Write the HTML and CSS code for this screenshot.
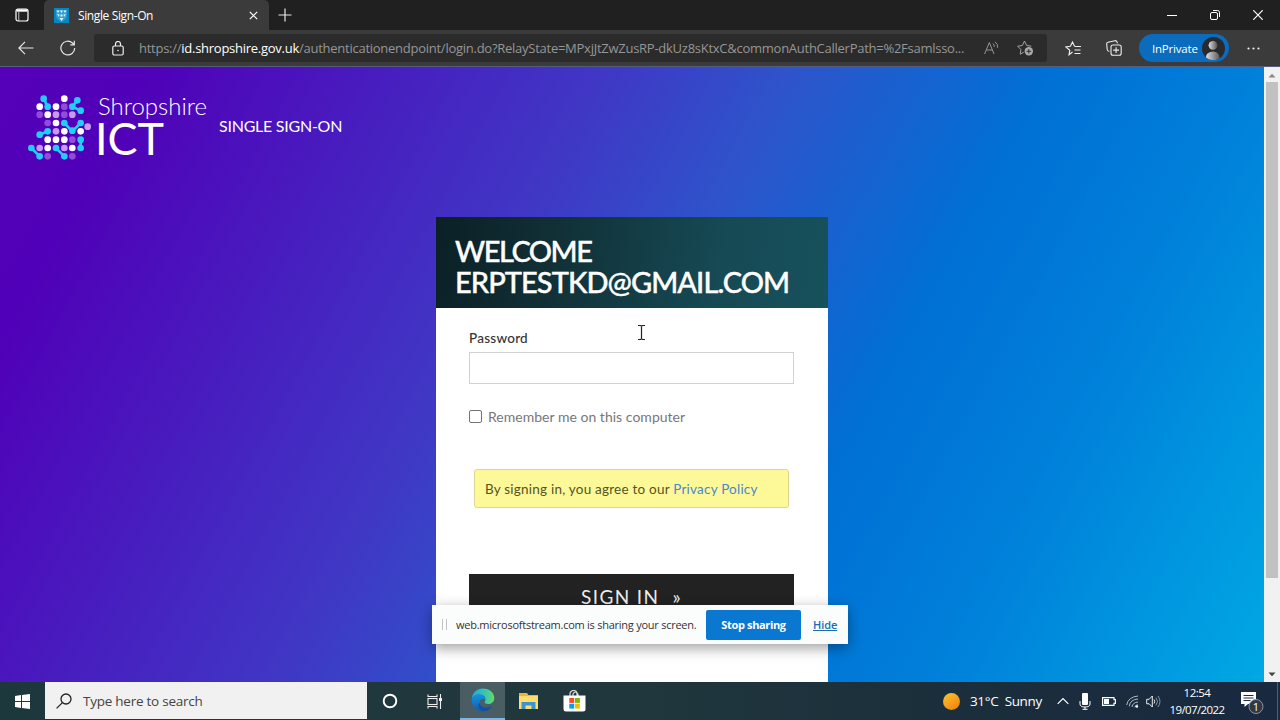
FILE: index.html
```html
<!DOCTYPE html>
<html lang="en">
<head>
<meta charset="utf-8">
<title>Single Sign-On</title>
<link rel="stylesheet" href="styles.css">
</head>
<body>
<div class="desktop">
  <header class="tabbar">
    <div class="tab-actions">
      <svg width="14" height="14" viewBox="0 0 14 14" fill="none" stroke="#fff"><rect x="1" y="1" width="12" height="12" rx="2" stroke-width="1.2"/><path d="M1.5 2.5h11" stroke-width="2.4"/><path d="M3.8 4v9" stroke-width="1" opacity=".7"/></svg>
    </div>
    <div class="tab">
      <svg class="favicon" width="15" height="15" viewBox="0 0 15 15"><rect width="15" height="15" fill="#0787bd"/><path d="M2 2h11v5c0 3-2 5-5.5 7C4 12 2 10 2 7z" fill="#329fd0"/><path d="M2.500 2.500h3L4 5zM6 2.500h3L7.500 5zM9.500 2.500h3L11 5zM3 6l2.500.5L5 9zM12 6l-2.500.5L10 9zM6.500 6.500h2v2h-2zM5.500 10h4l-2 3z" fill="#e6f5fc"/></svg>
      <span class="tab-title">Single Sign-On</span>
      <svg class="tab-close" width="9" height="9" viewBox="0 0 9 9" stroke="#fff" stroke-width="1.200"><path d="M.8.8l7.400 7.400M8.200.8L.8 8.200"/></svg>
    </div>
    <svg class="new-tab" width="14" height="14" viewBox="0 0 14 14" stroke="#e8e8e8" stroke-width="1.200"><path d="M7 .5v13M.5 7h13"/></svg>
    <div class="window-buttons">
      <svg width="10" height="10" viewBox="0 0 10 10" stroke="#fff"><path d="M0 5.500h10"/></svg>
      <svg width="10" height="10" viewBox="0 0 10 10" stroke="#fff" fill="none"><rect x=".5" y="2.500" width="7" height="7" rx="1.500"/><path d="M3 .5h4.500a2 2 0 0 1 2 2v4.500"/></svg>
      <svg width="10" height="10" viewBox="0 0 10 10" stroke="#fff" stroke-width="1.200"><path d="M.3.3l9.400 9.400M9.700.3L.3 9.700"/></svg>
    </div>
  </header>

  <nav class="toolbar">
    <svg class="back" width="16" height="14" viewBox="0 0 16 14" fill="none" stroke="#e6e6e6" stroke-width="1.200"><path d="M15.500 7H1M7 .8L.9 7 7 13.200"/></svg>
    <svg class="reload" width="16" height="16" viewBox="0 0 16 16" fill="none" stroke="#e6e6e6" stroke-width="1.200"><path d="M14.700 8A6.900 6.900 0 1 1 12.500 3L14 4.500M14.300.8v4H10.300"/></svg>
    <div class="address">
      <svg class="lock" width="12" height="15" viewBox="0 0 12 15" fill="none" stroke="#eee" stroke-width="1.200"><rect x=".8" y="5" width="10.400" height="9" rx="1.500"/><path d="M3.500 5V3a2.500 2.500 0 0 1 5 0v2"/><circle cx="6" cy="9.500" r=".8" fill="#eee" stroke="none"/></svg>
      <span class="url">https://<b>id.shropshire.gov.uk</b><span class="url-path">/authenticationendpoint/login.do?RelayState=MPxjJtZwZusRP-dkUz8sKtxC&amp;commonAuthCallerPath=%2Fsamlsso...</span></span>
      <svg class="read-aloud" width="15" height="14" viewBox="0 0 15 14" fill="none" stroke="#969696"><path d="M.6 13L5.300 1.500 10 13M2.200 9h6.200M9 2.500q1.500 1.500 1.300 3.500M11 .8q3 2.300 2.700 6"/></svg>
      <svg class="add-fav" width="17" height="16" viewBox="0 0 17 16" fill="none" stroke="#a5a5a5"><path d="M6.800 12.200L3.200 14.200l.7-4.700L.7 6.200l4.600-.7L7.500 1l2.200 4.500 4.600.7"/><circle cx="11.800" cy="11.300" r="4.200" fill="#aaa" stroke="none"/><path d="M11.800 9v4.600M9.500 11.300h4.600" stroke="#2b2b2b"/></svg>
    </div>
    <svg class="favs" width="17" height="15" viewBox="0 0 17 15" fill="none" stroke="#eee" stroke-width="1.100"><path d="M7.500 11L4 13.800l.8-4.600L.8 6l4.600-.7L7.500 1l2 4.300M9.500 5.500h6.500M9.500 9h6M9.500 12.500h6"/></svg>
    <svg class="collections" width="16" height="16" viewBox="0 0 16 16" fill="none" stroke="#eee" stroke-width="1.100"><rect x="5" y="5" width="10.200" height="10.200" rx="2"/><path d="M10.100 7.200v5.800M7.200 10.100H13M3.300 11.500Q1.500 11 1.200 9.500L.7 4Q.5 2.500 2 2.200L9 .7Q10.500.5 11 2l.5 1.200"/></svg>
    <div class="inprivate"><span>InPrivate</span>
      <svg width="23" height="23" viewBox="0 0 23 23"><defs><linearGradient id="person"><stop stop-color="#ddd"/><stop offset="1" stop-color="#555"/></linearGradient><clipPath id="avatar"><circle cx="11.500" cy="11.500" r="11.500"/></clipPath></defs><g clip-path="url(#avatar)"><rect width="23" height="23" fill="#282a2d"/><circle cx="11" cy="8.300" r="4.400" fill="url(#person)"/><path d="M4 23v-3q0-5 7.500-5.500Q18 15 18 23z" fill="url(#person)"/></g></svg>
    </div>
    <svg class="more" width="13" height="3" viewBox="0 0 13 3" fill="#eee"><circle cx="1.500" cy="1.500" r="1.100"/><circle cx="6.500" cy="1.500" r="1.100"/><circle cx="11.500" cy="1.500" r="1.100"/></svg>
  </nav>

  <div class="viewport">
    <main class="page">
      <div class="brand">
        <svg class="logo" width="64" height="68" viewBox="39 39 192 204">
          <path d="M86 56l12 24M187 61l-15 19 25 12M148 129l24 25 25-25M74 164l24-10M197 179v25M49 204l25 25M123 204l25 25" fill="none" stroke="#22cdf8" stroke-width="8"/>
          <g fill="#fff"><circle cx="148" cy="56" r="10"/><circle cx="74" cy="80" r="10"/><circle cx="123" cy="80" r="10"/><circle cx="98" cy="104" r="10"/><circle cx="123" cy="129" r="10"/><circle cx="148" cy="154" r="10"/><circle cx="197" cy="154" r="10"/><circle cx="98" cy="179" r="10"/><circle cx="123" cy="179" r="10"/><circle cx="148" cy="179" r="10"/><circle cx="98" cy="204" r="10"/><circle cx="172" cy="204" r="10"/></g>
          <g fill="#22cdf8"><circle cx="86" cy="56" r="10"/><circle cx="187" cy="61" r="10"/><circle cx="98" cy="80" r="10"/><circle cx="172" cy="80" r="10"/><circle cx="197" cy="92" r="10"/><circle cx="148" cy="129" r="10"/><circle cx="197" cy="129" r="10"/><circle cx="172" cy="152" r="10"/><circle cx="98" cy="154" r="10"/><circle cx="74" cy="164" r="10"/><circle cx="197" cy="179" r="10"/><circle cx="197" cy="204" r="10"/><circle cx="49" cy="204" r="10"/><circle cx="123" cy="204" r="10"/><circle cx="74" cy="229" r="10"/><circle cx="148" cy="229" r="10"/></g>
          <g fill="#c69af2"><circle cx="123" cy="104" r="10"/><circle cx="172" cy="104" r="10"/><circle cx="218" cy="140" r="10"/><circle cx="123" cy="154" r="10"/><circle cx="74" cy="204" r="10"/><circle cx="148" cy="204" r="10"/></g>
          <g fill="#914dd8"><circle cx="148" cy="80" r="10"/><circle cx="74" cy="104" r="10"/><circle cx="148" cy="104" r="10"/><circle cx="98" cy="129" r="10"/><circle cx="172" cy="179" r="10"/><circle cx="98" cy="229" r="10"/><circle cx="172" cy="229" r="10"/></g>
        </svg>
        <svg class="wordmark" width="116" height="70" viewBox="0 0 116 70" fill="#fff">
          <text class="word-top" x="6" y="22" textLength="109" lengthAdjust="spacingAndGlyphs">Shropshire</text>
          <text class="word-main" x="3" y="62" textLength="69" lengthAdjust="spacingAndGlyphs">ICT</text>
        </svg>
        <span class="product">SINGLE SIGN-ON</span>
      </div>

      <section class="card">
        <h1 class="welcome"><span class="w1">WELCOME</span><span class="w2">ERPTESTKD@GMAIL.COM</span></h1>
        <div class="form">
          <span class="label">Password</span>
          <div class="field"></div>
          <div class="remember"><span class="box"></span><span>Remember me on this computer</span></div>
          <div class="notice"><span>By signing in, you agree to our </span><a>Privacy Policy</a></div>
          <div class="signin"><span>SIGN IN</span><span class="raquo">»</span></div>
        </div>
      </section>
    </main>
    <div class="scrollbar">
      <svg width="8" height="5" viewBox="0 0 8 5"><path d="M.5 4.500L4 .8l3.500 3.700z" fill="#8a8a8a"/></svg>
      <div class="thumb"></div>
      <svg width="8" height="5" viewBox="0 0 8 5"><path d="M.5.5L4 4.200 7.500.5z" fill="#444"/></svg>
    </div>
  </div>

  <footer class="taskbar">
    <div class="start"><svg width="15" height="15" viewBox="0 0 15 15" fill="#fff"><path d="M0 2l6-.9v6H0zM7 1l8-1v7.100H7zM0 8h6v6l-6-.9zM7 8h8v7l-8-1z"/></svg></div>
    <div class="search"><svg width="16" height="16" viewBox="0 0 16 16" fill="none" stroke="#222" stroke-width="1.300"><circle cx="10" cy="6" r="5"/><path d="M6.400 9.600L.6 15.400"/></svg><span>Type here to search</span></div>
    <div class="task"><svg width="16" height="16" viewBox="0 0 16 16"><circle cx="8" cy="8" r="6.300" fill="none" stroke="#fff" stroke-width="1.900"/></svg></div>
    <div class="task view"><svg width="16" height="15" viewBox="0 0 16 15" fill="none" stroke="#eee" stroke-width="1.100"><path d="M1 .5v2h9v-2M1 14.500v-2h9v2"/><rect x="1" y="4.500" width="9" height="6"/><path d="M13.500 0v15"/><path d="M12 5.500h3" stroke-width="3"/></svg></div>
    <div class="task active"><svg width="24" height="24" viewBox="0 0 24 24"><defs><linearGradient id="sea"><stop stop-color="#20a9dd"/><stop offset=".55" stop-color="#35c3bd"/><stop offset="1" stop-color="#65dc59"/></linearGradient><linearGradient id="deep" x1="0" y1="0" x2="0" y2="1"><stop stop-color="#1493e0"/><stop offset="1" stop-color="#125baa"/></linearGradient></defs><path d="M.7 11C1.300 4.500 6.300.5 12 .5 19 .5 23.300 5 23.300 10c0 4-3 6-6.300 6-2.500 0-4-1-3.300-2.200C16 10 13 6.500 8.500 6.500 4.500 6.500 1.500 8.500.7 11z" fill="url(#sea)"/><path d="M.7 11C1.500 8 5 6.300 8.500 6.500c4 0 6.500 3 5.600 6-1.800-3-5.700-1.200-5.300 2.300.4 4.700 6 6.500 12.500 3-2 3.700-5.500 5.700-9.300 5.700C5 23.500.2 17.500.7 11z" fill="url(#deep)"/><path d="M8.800 14.800c.4 4.700 6 6.500 12.500 3-2 3.500-5 5.200-7.500 5.500-6-.5-8-6.500-5-8.500z" fill="#174fa4"/></svg></div>
    <div class="task"><svg width="21" height="18" viewBox="0 0 21 18"><path d="M1 1h8l1.500 2H20v14H1z" fill="#eeb52f"/><path d="M1 4h19v13H1z" fill="#ffdc70"/><path d="M3.500 17v-7h14v7h-4v-3.500h-6V17z" fill="#3b94ce"/></svg></div>
    <div class="task"><svg width="23" height="23" viewBox="0 0 23 23"><path d="M7 7V4a3.500 3.500 0 0 1 7 0v3M10 6V4q2-4 5 0v3" fill="none" stroke="#ddd" stroke-width="1.200"/><path d="M.5 5.500h22V19q0 2.500-2.500 2.500H3Q.5 21.500.5 19z" fill="#fff"/><path d="M6.300 8h4.900v4.900H6.300z" fill="#ef5025"/><path d="M12 8h4.900v4.900H12z" fill="#7cb900"/><path d="M6.300 13.700h4.900v4.900H6.300z" fill="#00a1e8"/><path d="M12 13.700h4.900v4.900H12z" fill="#fdb900"/></svg></div>
    <div class="tray">
      <span class="sun"></span>
      <span class="weather">31°C&nbsp; Sunny</span>
      <svg class="chev" width="12" height="8" viewBox="0 0 12 8" fill="none" stroke="#fff" stroke-width="1.200"><path d="M.7 6.800L6 1.500l5.300 5.300"/></svg>
      <svg class="mic" width="12" height="17" viewBox="0 0 12 17" fill="#fff"><rect x="3" width="6" height="12" rx="1"/><path d="M1 8v3q0 3 5 3t5-3V8M6 14v2.500M3.500 16.300h5" fill="none" stroke="#fff"/></svg>
      <svg class="battery" width="14" height="9" viewBox="0 0 14 9"><path d="M.6.6h11.400v2h1.400v3.800H12v2H.6z" fill="none" stroke="#fff" stroke-width="1.200"/><path d="M2 2h5v5H2z" fill="#fff"/></svg>
      <svg class="wifi" width="13" height="13" viewBox="0 0 13 13" fill="none" stroke="#aebbc4"><path d="M.7 10Q2 2 12 1M3.300 11.300Q4 4.500 12 4M6 12Q6.500 7.500 12 7M8.800 12.300Q9 10 12 9.800"/><circle cx="10.800" cy="11.500" r="1.300" fill="#fff" stroke="none"/></svg>
      <svg class="speaker" width="15" height="13" viewBox="0 0 15 13" fill="none" stroke="#eee"><path d="M.7 4.300h2.500L6.300 1v11L3.200 8.800H.7zM8 4.500q1.500 2 0 4"/><path d="M10 2.700q3 3.800 0 7.600M12 1q4 5.500 0 11" stroke="#8393a0"/></svg>
      <div class="clock"><span>12:54</span><span class="date">19/07/2022</span></div>
      <svg class="alerts" width="24" height="24" viewBox="0 0 24 24"><path d="M1 1h15v12h-8l-3.500 3v-3H1z" fill="#fff"/><path d="M3.500 4.500h10M3.500 7h10M3.500 9.500h7" stroke="#1b2c41"/><circle cx="16" cy="15.500" r="7" fill="#303846" stroke="#8d949c"/><text class="badge" x="16" y="19.500" text-anchor="middle">1</text></svg>
      <span class="peek"></span>
    </div>
  </footer>

  <div class="share">
    <span class="grip"></span>
    <span class="share-text">web.microsoftstream.com is sharing your screen.</span>
    <span class="stop">Stop sharing</span>
    <span class="hide">Hide</span>
  </div>
  <svg class="cursor" width="9" height="17" viewBox="0 0 9 17" fill="none" stroke="#222" stroke-width="1.200"><path d="M1 1.500h2.500l1 .8 1-.8H8M4.500 2v13M1 15.500h2.500l1-.8 1 .8H8"/></svg>
</div>
</body>
</html>
```
FILE: styles.css
```css
* { box-sizing: border-box; }
body { margin: 0; overflow: hidden; font-family: "Open Sans", "Noto Sans", sans-serif; }
svg { display: block; flex: none; }
span, a { white-space: nowrap; }

.desktop { position: relative; width: 1280px; height: 720px; display: flex; flex-direction: column; overflow: hidden; }

.tabbar { flex: none; height: 30px; display: flex; background: #202020; color: #fff; }
.tab-actions { width: 44px; padding: 8px 0 0 15px; }
.tab { width: 225px; display: flex; align-items: center; padding-left: 10px; background: #3b3b3b; border-radius: 5px 5px 0 0; }
.tab-title { flex: 1; margin-left: 9px; font-size: 12px; letter-spacing: -0.38px; }
.tab-close { margin-right: 11px; }
.new-tab { margin: 8px 0 0 9px; }
.window-buttons { margin-left: auto; padding: 10px 17px 0 0; display: flex; gap: 33px; }

.toolbar { flex: none; height: 37px; display: flex; align-items: center; background: #3b3b3b; border-bottom: 1px solid #555c7c; }
.back { margin-left: 18px; }
.reload { margin-left: 26px; }
.address { width: 953px; height: 28px; margin-left: 18px; display: flex; align-items: center; border-radius: 3px; background: #2b2b2b; }
.lock { margin-left: 18px; }
.url { width: 830px; margin-left: 15px; font-size: 13px; letter-spacing: -0.26px; color: #969696; }
.url b { font-weight: 400; color: #fff; }
.read-aloud { margin-left: 15px; }
.add-fav { margin-left: 18px; }
.favs { margin-left: 18px; }
.collections { margin-left: 24px; }
.inprivate { width: 90px; height: 28px; margin-left: 17px; display: flex; align-items: center; justify-content: space-between; padding: 0 4px 0 13px; border-radius: 14px; background: #0b6cbd; color: #fff; font-size: 11.5px; letter-spacing: -0.2px; }
.more { margin-left: 18px; }

.viewport { flex: none; height: 615px; display: flex; }
.page { width: 1264px; display: flex; flex-direction: column; align-items: center; overflow: hidden; background: linear-gradient(118deg, #5600ba 0%, #5000b8 9%, #4037c5 38%, #2e54cb 50%, #0070d5 66%, #0080da 79%, #00a8e4 100%); }
.brand { flex: none; align-self: stretch; height: 150px; padding: 26px 0 0 28px; display: flex; align-items: flex-start; color: #fff; }
.word-top { font: 300 23px Lato, sans-serif; }
.word-main { font: 400 44px Lato, sans-serif; }
.product { margin: 21px 0 0 11px; font: 400 16px/24px Lato, sans-serif; letter-spacing: -0.25px; }

.card { flex: none; width: 392px; height: 480px; background: #fff; }
.welcome { height: 91px; margin: 0; padding: 18px 19px; display: flex; flex-direction: column; align-items: flex-start; background: linear-gradient(100deg, #0a2025 0%, #113036 30%, #164a55 72%, #16515c 100%); color: #fff; font: 500 29px/31px Lato, sans-serif; -webkit-text-stroke: 0.4px #fff; }
.w1 { letter-spacing: -1.5px; }
.w2 { letter-spacing: -0.93px; }
.form { padding: 19px 34px 0 33px; display: flex; flex-direction: column; font-family: Lato, sans-serif; }
.label { height: 25px; font-size: 13.5px; line-height: 22px; font-weight: 500; letter-spacing: 0.25px; color: #333; }
.field { height: 32px; border: 1px solid #d2d2d2; }
.remember { height: 20px; margin-top: 22px; display: flex; align-items: center; gap: 6px; font-size: 14px; color: #777; letter-spacing: 0.02px; }
.box { width: 13px; height: 13px; border: 1px solid #737373; border-radius: 2px; }
.notice { height: 39px; margin: 43px 5px 0; padding: 0 10px; display: flex; align-items: center; white-space: pre; border: 1px solid #dfd591; border-radius: 3px; background: #fdf999; font-size: 13.5px; letter-spacing: 0.22px; color: #53531e; }
.notice span { white-space: pre; }
.notice a { color: #4b86cf; }
.signin { height: 44px; margin-top: 66px; display: flex; align-items: center; justify-content: center; gap: 13px; background: #222; color: #eee; font-size: 19px; letter-spacing: 1.4px; }

.scrollbar { width: 16px; padding: 6px 0 5px; display: flex; flex-direction: column; align-items: center; background: #f1f1f1; }
.thumb { width: 12px; height: 496px; margin: 4px 0 auto; background: #c1c1c1; }

.taskbar { flex: none; height: 38px; display: flex; background: linear-gradient(90deg, #1d383d 0%, #20373d 50%, #1b2e3b 75%, #192941 100%); color: #fff; }
.start { width: 45px; padding: 12px 0 0 15px; }
.search { width: 322px; height: 37px; padding-left: 11px; display: flex; align-items: center; gap: 11px; background: #f1f1f1; color: #444; font-size: 13.5px; letter-spacing: -0.25px; }
.task { width: 46px; display: flex; align-items: center; justify-content: center; }
.view { width: 47px; padding-right: 3px; }
.active { width: 45px; background: #495d62; border-bottom: 2px solid #76b9ed; }
.tray { flex: 1; display: flex; align-items: center; }
.sun { width: 17px; height: 17px; margin-left: 346px; border-radius: 50%; background: linear-gradient(145deg, #ffc52e, #f07c0b); }
.weather { width: 72px; margin-left: 10px; font-size: 13.5px; letter-spacing: -0.35px; }
.chev { margin-left: 15px; }
.mic { margin-left: 10px; }
.battery { margin-left: 11px; }
.wifi { margin-left: 10px; }
.speaker { margin-left: 7px; }
.clock { width: 54px; margin-left: 9px; display: flex; flex-direction: column; align-items: center; font-size: 11.5px; line-height: 17px; letter-spacing: -0.5px; }
.date { letter-spacing: -0.6px; }
.alerts { margin: 4px 0 0 16px; }
.badge { font: 11px "Open Sans", sans-serif; fill: #fff; }
.peek { align-self: stretch; width: 1px; margin: 0 2px 0 auto; background: #53606e; }

.share { position: absolute; left: 432px; top: 605px; width: 416px; height: 39px; display: flex; align-items: center; background: #fbfdfd; box-shadow: 0 4px 14px rgba(0, 0, 0, .38); font-size: 11px; color: #333; }
.grip { width: 5px; height: 11px; margin-left: 10px; border: solid #c3c3c3; border-width: 0 1px; }
.share-text { width: 241px; margin-left: 9px; letter-spacing: -0.25px; }
.stop { width: 95px; height: 30px; margin-left: 9px; border-radius: 2px; background: #0a78d1; color: #fff; text-align: center; font-weight: 700; line-height: 29px; letter-spacing: -0.35px; }
.hide { margin-left: 12px; color: #1a6cb4; text-decoration: underline; font-weight: 600; letter-spacing: -0.1px; }
.cursor { position: absolute; left: 637px; top: 324px; }
```
